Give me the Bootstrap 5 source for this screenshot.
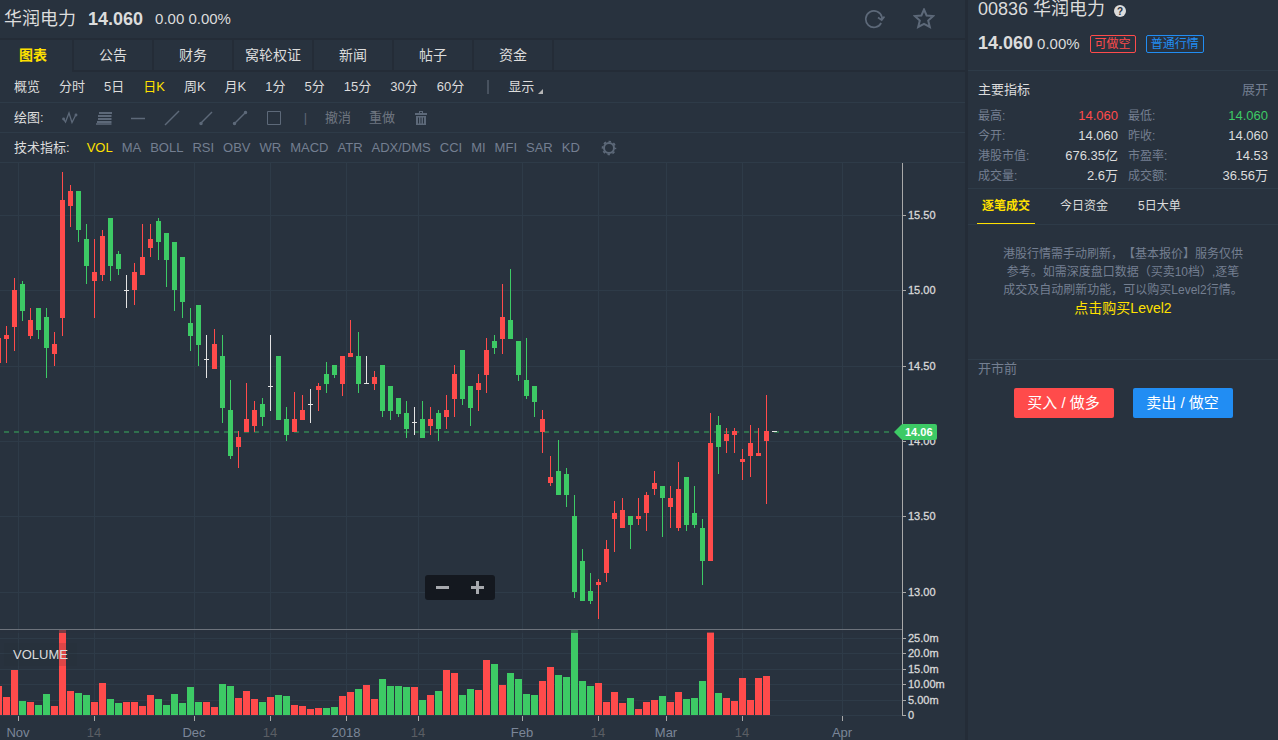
<!DOCTYPE html>
<html lang="zh-CN" data-bs-theme="dark">
<head>
<meta charset="utf-8">
<meta name="viewport" content="width=device-width, initial-scale=1">
<title>华润电力 00836</title>
<link href="https://cdn.jsdelivr.net/npm/bootstrap@5.3.0/dist/css/bootstrap.min.css" rel="stylesheet">
<style>
:root{--panel:#28323e;--edge:#242c37;--rule:#2e3b48;--ink:#dcdcdc;--dim:#747f91;--icon:#5d6979;--gold:#ffe000;--up:#ff4b4b;--down:#3dca65;--sky:#218df3}
body{background:var(--panel);color:var(--ink);font:13px/18px "Liberation Sans","Noto Sans CJK SC",sans-serif}
a{color:inherit;text-decoration:none}
button.flat{background:none;border:0;padding:0;color:inherit;white-space:nowrap}
svg{display:block}
.chart-side{border-right:3px solid var(--edge);min-width:0}
.quote-side{width:310px}
.quote-head{height:40px;border-bottom:2px solid var(--edge);padding:0 30px 0 4px}
.name-text{font-size:18px}
.price-text{font-size:18px;font-weight:700}
.change-text{font-size:15px}
.dim{color:var(--dim)}
.plain{color:var(--ink)}
.gold,button.gold{color:var(--gold)!important}
.page-tabs{height:32px;font-size:14px}
.page-tabs a{width:80px;line-height:30px;text-align:center;border-right:2px solid var(--edge);border-bottom:2px solid var(--edge)}
.page-tabs a.current{width:74px;padding-right:6px;border-bottom:0;font-weight:700}
.page-tabs span{border-bottom:2px solid var(--edge)}
.tool-row{height:30px;border-bottom:1px solid var(--rule);padding-left:14px}
.time-row{height:31px;gap:19px}
.split-bar{width:2px;height:14px;background:#48525f}
.show-menu{color:#b0b0b0}
.draw-row{gap:18px;color:#5d6674}
.draw-row .words{color:#6f7681}
.ind-row{gap:9px;color:var(--dim)}
.zoom-box{position:absolute;left:44%;top:412px;background:#14181f;border-radius:3px;color:#a7a9ae}
.zoom-box button{width:35px;height:25px;display:flex;align-items:center;justify-content:center}
.axis-num{font-size:11px;fill:#d8d8d8;stroke:#d8d8d8;stroke-width:.3}
.axis-date{font-size:13px;fill:#7b8698;text-anchor:middle}
.axis-date.minor{fill:#5a5e64}
.up{fill:var(--up)}.down{fill:var(--down)}.even{fill:#e3e3e3}
.sec{border-bottom:1px solid var(--rule);padding-left:10px;padding-right:10px}
.sec-head{height:71px}
.chips{gap:10px}
.chip{font-size:12px;line-height:16px;border:1px solid;border-radius:2px;padding:0 4px}
.chip-red{color:var(--up)}.chip-blue{color:var(--sky)}
.facts-sec{height:118px;padding-top:12px}
.facts-title{line-height:14px;margin-bottom:9px}
.facts{width:100%;table-layout:fixed}
.facts td,.facts th{height:20px;padding:0;font-weight:400}
.facts th{color:var(--dim);font-size:12px}
.facts td{text-align:right}
.facts td.first{width:80px;padding-right:10px}
.deal-tabs{height:36px;font-size:12px;padding-left:9px;gap:20px}
.deal-tabs a{line-height:34px;padding:0 5px}
.deal-tabs a.current{border-bottom:1px solid var(--gold)}
.notice{height:135px;padding-top:20px;font-size:12px;text-spacing-trim:space-all}
.buy-level{font-size:14px}
.trade{padding:0 10px}
.trade-row{gap:19px;margin-top:10px}
.trade-btn{width:100px;height:30px;padding:0;border:0;border-radius:2px;color:#fff;font-size:15px;line-height:30px}
.buy{background:var(--up)}.sell{background:var(--sky)}
</style>
</head>
<body>
<div class="d-flex min-vh-100">
<main class="chart-side flex-grow-1">
  <header class="quote-head d-flex align-items-center">
    <span class="name-text me-2 pe-1">华润电力</span>
    <span class="price-text me-2 pe-1">14.060</span>
    <span class="change-text">0.00 0.00%</span>
    <button class="flat ms-auto me-4 pe-1" aria-label="刷新"><svg width="22" height="22" fill="none" stroke="#5d6979" stroke-width="1.7"><path d="M18.200 15A8.200 8.200 0 1 1 18.900 9V11.500M15 9.500L18.700 12L21.500 8.500"/></svg></button>
    <button class="flat" aria-label="收藏"><svg width="22" height="22" fill="none" stroke="#5d6979" stroke-width="2"><path d="M11 1.500L13.600 7.500L20.200 8.100L15.200 12.500L16.800 19L11 15.800L5.200 19L6.800 12.500L1.800 8.100L8.400 7.500Z"/></svg></button>
  </header>
  <nav class="page-tabs d-flex">
    <a href="#" class="current gold">图表</a><a href="#">公告</a><a href="#">财务</a><a href="#">窝轮权证</a><a href="#">新闻</a><a href="#">帖子</a><a href="#">资金</a><span class="flex-grow-1"></span>
  </nav>
  <div class="tool-row time-row d-flex align-items-center">
    <button class="flat">概览</button><button class="flat">分时</button><button class="flat">5日</button><button class="flat gold">日K</button><button class="flat">周K</button><button class="flat">月K</button><button class="flat">1分</button><button class="flat">5分</button><button class="flat">15分</button><button class="flat">30分</button><button class="flat">60分</button>
    <span class="split-bar ms-1"></span>
    <button class="flat show-menu d-flex align-items-end gap-1"><span>显示</span><svg width="6" height="12"><path d="M0 10L5 5V10Z" fill="#b5b5b5"/></svg></button>
  </div>
  <div class="tool-row draw-row d-flex align-items-center">
    <span class="plain">绘图:</span>
    <button class="flat" aria-label="折线"><svg width="16" height="16" fill="none" stroke="#5d6979" stroke-width="1.3"><path d="M1.5 9L3.5 12L7 3L10 12.500L13.5 5.500"/><circle cx="1.6" cy="9" r=".8"/><circle cx="14" cy="5" r=".8"/></svg></button>
    <button class="flat" aria-label="斐波那契"><svg width="16" height="16" fill="none" stroke="#5d6979" stroke-width="2"><path d="M3 3H16M2 6H15.500M2 9H15.500M1 12H15.500"/><path d="M0 14H15.500" stroke-width="1.500"/></svg></button>
    <button class="flat" aria-label="水平线"><svg width="16" height="16" stroke="#5d6979" stroke-width="1.5"><path d="M1 8.500H15"/></svg></button>
    <button class="flat" aria-label="直线"><svg width="16" height="16" stroke="#5d6979" stroke-width="1.5"><path d="M1 15L15 1"/></svg></button>
    <button class="flat" aria-label="射线"><svg width="16" height="16" stroke="#5d6979" stroke-width="1.5"><path d="M3 13L14 2"/><circle cx="3" cy="13.500" r="1" fill="#5d6979"/></svg></button>
    <button class="flat" aria-label="线段"><svg width="16" height="16" stroke="#5d6979" stroke-width="1.5"><path d="M3 13L13 3"/><circle cx="2.500" cy="13.500" r="1" fill="#5d6979"/><circle cx="13.500" cy="2.500" r="1" fill="#5d6979"/></svg></button>
    <button class="flat" aria-label="矩形"><svg width="16" height="16" fill="none" stroke="#5d6979"><path d="M1.500 1.500H14.500V14.500H1.500Z"/></svg></button>
    <span class="ps-1">|</span>
    <button class="flat words">撤消</button><button class="flat words">重做</button>
    <button class="flat" aria-label="删除"><svg width="16" height="16" fill="#5d6979"><path fill-rule="evenodd" d="M2 3H6V1H10V3H14V5H2ZM7 2V3H9V2ZM3 6H13V15H3ZM5 7.500V13.500H6V7.500ZM7.500 7.500V13.500H8.500V7.500ZM10 7.500V13.500H11V7.500Z"/></svg></button>
  </div>
  <div class="tool-row ind-row d-flex align-items-center">
    <span class="plain me-2">技术指标:</span>
    <button class="flat gold">VOL</button><button class="flat">MA</button><button class="flat">BOLL</button><button class="flat">RSI</button><button class="flat">OBV</button><button class="flat">WR</button><button class="flat">MACD</button><button class="flat">ATR</button><button class="flat">ADX/DMS</button><button class="flat">CCI</button><button class="flat">MI</button><button class="flat">MFI</button><button class="flat">SAR</button><button class="flat">KD</button>
    <button class="flat ms-2 ps-1" aria-label="设置"><svg width="16" height="16" fill="none" stroke="#5d6979"><circle cx="8" cy="8" r="5" stroke-width="2"/><circle cx="8" cy="8" r="6.500" stroke-width="1.600" stroke-dasharray="2.500 2.605" stroke-dashoffset="1.250"/></svg></button>
  </div>
  <div class="position-relative">
    <svg id="chart" viewBox="0 163 965 577" width="100%" shape-rendering="crispEdges"></svg>
    <div class="zoom-box d-flex">
      <button class="flat" aria-label="缩小"><svg width="13" height="13" fill="currentColor"><path d="M0 5H13V8H0Z"/></svg></button>
      <button class="flat" aria-label="放大"><svg width="13" height="13" fill="currentColor"><path d="M0 5H5V0H8V5H13V8H8V13H5V8H0Z"/></svg></button>
    </div>
  </div>
</main>
<aside class="quote-side flex-shrink-0">
  <section class="sec sec-head">
    <div class="d-flex align-items-center"><span class="name-text">00836 华润电力</span>
      <svg class="ms-2 mt-1" width="14" height="14" aria-label="帮助"><circle cx="7" cy="7" r="6" fill="#dcdcdc"/><text x="7" y="11" text-anchor="middle" font-size="10" font-weight="700" fill="#28313d">?</text></svg></div>
    <div class="chips d-flex align-items-center mt-3"><span><span class="price-text me-1">14.060</span><span class="change-text">0.00%</span></span>
      <span class="chip chip-red">可做空</span><span class="chip chip-blue">普通行情</span></div>
  </section>
  <section class="sec facts-sec">
    <div class="facts-title d-flex justify-content-between"><span>主要指标</span><a href="#" class="dim">展开</a></div>
    <table class="facts">
      <tr><th>最高:</th><td class="first" style="color:var(--up)">14.060</td><th>最低:</th><td style="color:var(--down)">14.060</td></tr>
      <tr><th>今开:</th><td class="first">14.060</td><th>昨收:</th><td>14.060</td></tr>
      <tr><th>港股市值:</th><td class="first">676.35亿</td><th>市盈率:</th><td>14.53</td></tr>
      <tr><th>成交量:</th><td class="first">2.6万</td><th>成交额:</th><td>36.56万</td></tr>
    </table>
  </section>
  <nav class="sec deal-tabs d-flex">
    <a href="#" class="current gold fw-bold">逐笔成交</a><a href="#">今日资金</a><a href="#">5日大单</a>
  </nav>
  <section class="sec notice text-center">
    <div class="dim">港股行情需手动刷新，【基本报价】服务仅供<br>参考。如需深度盘口数据（买卖10档）,逐笔<br>成交及自动刷新功能，可以购买Level2行情。</div>
    <a href="#" class="gold buy-level">点击购买Level2</a>
  </section>
  <section class="trade">
    <div class="dim">开市前</div>
    <div class="trade-row d-flex justify-content-center">
      <button class="trade-btn buy">买入 / 做多</button><button class="trade-btn sell">卖出 / 做空</button>
    </div>
  </section>
</aside>
</div>
<script src="https://cdn.jsdelivr.net/npm/bootstrap@5.3.0/dist/js/bootstrap.bundle.min.js"></script>
<script>
// One day per entry: direction, high, body top, body bottom, low, volume bar top
const days = `r 338 338 363 363 686
r 326 335 339 363 697
r 278 290 327 351 670
g 281 284 311 321 701
r 308 320 336 339 702
g 308 308 330 339 705
g 308 317 348 378 694
r 332 344 354 366 706
r 172 200 318 336 630
r 185 191 206 227 691
g 191 191 230 242 693
g 224 239 266 284 695
r 239 272 281 318 702
r 230 236 275 281 683
g 218 218 266 281 699
g 251 254 269 275 703
w 275 290 291 308 702
r 263 272 290 305 702
r 224 257 275 275 706
r 224 239 248 257 695
g 218 221 242 260 699
g 233 233 260 287 705
g 242 242 290 311 694
g 257 257 302 318 703
g 308 323 336 351 687
g 305 305 345 366 702
w 335 359 360 378 702
r 329 344 369 369 707
g 335 356 408 423 684
g 380 410 456 459 686
r 431 437 447 468 698
r 383 419 432 432 691
r 401 410 426 432 699
g 398 404 417 426 702
w 335 386 387 411 697
g 356 356 420 420 695
g 407 419 435 441 696
r 392 419 432 432 705
r 395 410 420 420 706
w 389 404 405 423 709
r 383 386 390 411 708
g 362 374 384 393 708
g 365 365 375 378 707
r 356 356 384 396 696
r 320 353 357 357 692
g 332 356 384 393 689
w 356 383 384 384 685
r 371 377 384 390 699
g 365 365 411 417 679
g 386 386 411 420 686
g 398 398 414 417 686
g 401 413 429 438 687
w 407 422 423 435 687
g 401 419 438 438 700
r 407 419 426 435 695
g 410 413 429 441 691
r 395 410 417 429 670
r 365 374 399 417 673
g 350 350 399 405 695
g 386 386 408 426 689
r 374 383 390 411 690
r 338 350 375 393 660
g 335 341 348 354 664
r 284 317 339 354 685
g 269 320 339 339 673
g 341 341 375 381 679
g 338 380 396 399 694
g 386 386 402 417 695
r 410 419 432 453 681
r 456 477 483 486 667
g 440 471 495 495 675
g 468 474 495 507 677
g 495 516 592 598 630
g 549 561 601 601 681
g 573 591 601 604 686
r 579 582 585 619 683
r 540 549 573 582 702
r 501 513 519 552 692
r 498 510 528 528 703
g 516 516 525 549 698
r 498 516 519 525 709
r 492 495 513 531 702
r 471 483 489 495 700
g 486 486 498 537 696
r 486 498 507 528 702
r 462 489 528 531 692
g 477 477 525 531 699
g 486 513 525 528 698
g 519 528 561 585 681
r 413 443 561 561 632
g 416 425 447 474 693
r 428 434 441 453 698
r 428 431 435 453 701
r 449 459 462 480 678
r 425 443 456 477 700
r 428 453 456 456 678
r 395 431 441 504 676
w 431 431 432 432 715`.split('\n').map(l => l.split(' '));
const rect = (x, y, w, h, a) => `<rect x="${x}" y="${y}" width="${w}" height="${h}" ${a}/>`;
const tone = {r: 'up', g: 'down', w: 'even'};
const dates = [[18,'Nov'],[94,'14'],[194,'Dec'],[270,'14'],[346,'2018'],[418,'14'],[522,'Feb'],[598,'14'],[666,'Mar'],[742,'14'],[842,'Apr']];
const levels = [[215,'15.50'],[290,'15.00'],[366,'14.50'],[441,'14.00'],[516,'13.50'],[592,'13.00'],[638,'25.0m'],[653,'20.0m'],[669,'15.0m'],[684,'10.00m'],[700,'5.00m'],[715,'0']];
let out = '';
levels.forEach(([y]) => out += rect(0, y, 902, 1, 'fill="#2e3b48"'));
dates.forEach(([x]) => out += rect(x, 163, 1, 552, 'fill="#2e3b48"'));
out += '<path d="M4 432H894" stroke="#30704d" stroke-width="2" stroke-dasharray="5 5"/>';
out += rect(0, 629, 902, 1, 'fill="#6c727b"');
days.forEach(([d, hi, top, bottom, lo, vol], i) => {
  const x = 8 * i - 2, c = `class="${tone[d]}"`;
  out += rect(x, hi, 1, lo - hi, c) + rect(x - 2, top, 5, bottom - top, c);
  out += rect(x - 3, vol, 7, 715 - vol, `class="${d === 'g' ? 'down' : 'up'}"`);
});
out += rect(0, 630, 902, 3, 'fill="#28313d" opacity=".6"');
out += rect(4, 643, 73, 23, 'fill="#242c37" opacity=".15"') + '<text x="13" y="659" font-size="13" fill="#dcdcdc">VOLUME</text>';
out += rect(902, 163, 1, 553, 'fill="#a9a9a9"');
levels.forEach(([y, t]) => out += rect(902, y, 4, 1, 'fill="#a9a9a9"') + `<text class="axis-num" x="908" y="${y + 4}">${t}</text>`);
dates.forEach(([x, t]) => out += rect(x, 716, 1, 5, 'fill="#a9a9a9"') + `<text class="axis-date ${t === '14' ? 'minor' : ''}" x="${x}" y="737">${t}</text>`);
out += '<path shape-rendering="auto" d="M894 432L901 425Q902 424 903 424H935Q937 424 937 426V438Q937 440 935 440H903Q902 440 901 439Z" fill="#3dca65"/><text x="905" y="436" font-size="11" font-weight="700" fill="#fff">14.06</text>';
document.getElementById('chart').innerHTML = out;
</script>
</body>
</html>
